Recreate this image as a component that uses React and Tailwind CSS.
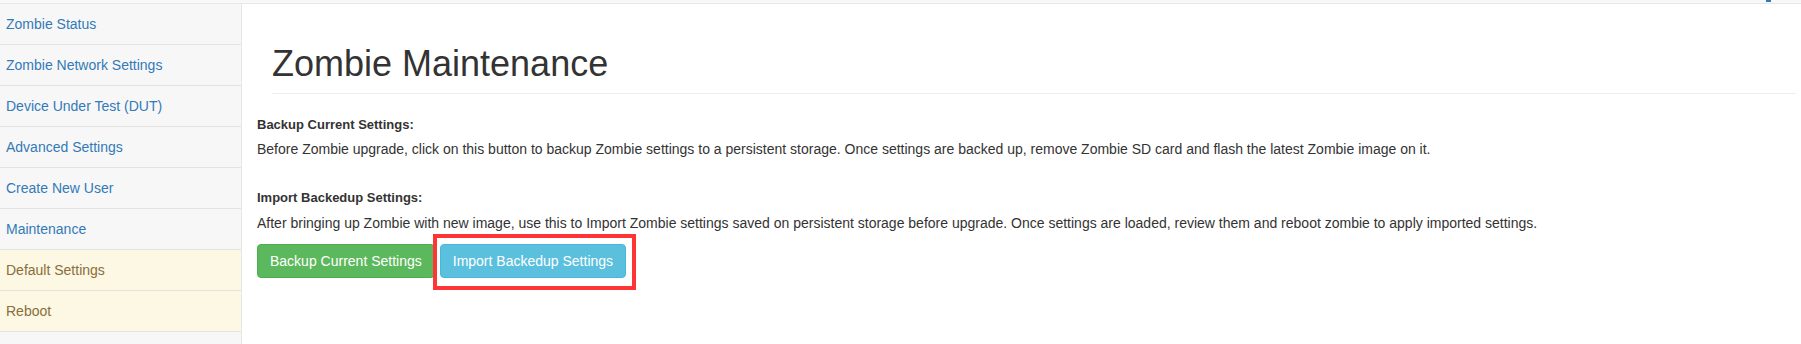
import React from 'react';

const menu = [
  { name: 'Zombie Status' },
  { name: 'Zombie Network Settings' },
  { name: 'Device Under Test (DUT)' },
  { name: 'Advanced Settings' },
  { name: 'Create New User' },
  { name: 'Maintenance' },
  { name: 'Default Settings', warn: true },
  { name: 'Reboot', warn: true },
];

const App = () => {
  return (
    <div className="w-[1801px] h-[344px] overflow-hidden bg-white font-['Liberation_Sans',Arial,sans-serif] text-[14px] text-[#333]">
      {/* Navbar edge */}
      <div className="h-[4px] bg-[#f8f8f8] border-b border-[#e7e7e7] flex justify-end items-start pr-[30px]">
        <span className="w-[5px] h-[2px] bg-[#337ab7]" />
      </div>

      <div className="flex h-[340px]">
        {/* Sidebar */}
        <aside className="w-[242px] shrink-0 bg-[#f7f7f7] border-r border-[#e7e7e7]">
          {menu.map((item) => (
            <a
              key={item.name}
              href="#"
              className={`flex items-center h-[41px] px-[6px] border-b border-[#e3e3e3] leading-[20px] ${item.warn ? 'bg-[#fcf8e3] text-[#8a6d3b]' : 'text-[#337ab7]'}`}
            >
              {item.name}
            </a>
          ))}
        </aside>

        {/* Content */}
        <main className="flex-1 pl-[15px] pr-[5px]">
          <div className="ml-[15px] mt-[40px] mb-[20px] pb-[9px] border-b border-[#eee]">
            <h1 className="text-[36px] leading-[39.6px] text-[#333]">Zombie Maintenance</h1>
          </div>

          <div className="pt-[1px]">
            <label className="block text-[13px] font-bold leading-[20px] mb-[4px]">Backup Current Settings:</label>
            <p className="leading-[20px]">
              Before Zombie upgrade, click on this button to backup Zombie settings to a persistent storage. Once settings are backed up, remove Zombie SD card and flash the latest Zombie image on it.
            </p>
          </div>

          <div className="mt-[29px]">
            <label className="block text-[13px] font-bold leading-[20px] mb-[5px]">Import Backedup Settings:</label>
            <p className="leading-[20px]">
              After bringing up Zombie with new image, use this to Import Zombie settings saved on persistent storage before upgrade. Once settings are loaded, review them and reboot zombie to apply imported settings.
            </p>
          </div>

          <div className="flex items-start gap-[5px] mt-[11px]">
            <button className="h-[34px] px-[12px] border border-[#4cae4c] bg-[#5cb85c] text-white rounded-[4px] leading-[20px]">
              Backup Current Settings
            </button>
            <div className="relative">
              <button className="h-[34px] px-[12px] border border-[#46b8da] bg-[#5bc0de] text-white rounded-[4px] leading-[20px]">
                Import Backedup Settings
              </button>
              <span className="absolute -left-[7px] -top-[10px] -right-[10px] -bottom-[12px] border-[4px] border-[#ff3535] pointer-events-none" />
            </div>
          </div>
        </main>
      </div>
    </div>
  );
};

export default App;
